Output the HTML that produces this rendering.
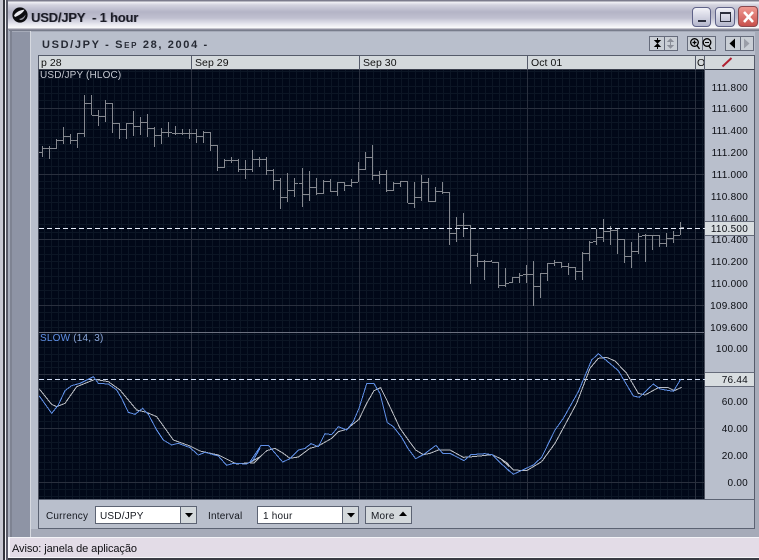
<!DOCTYPE html>
<html><head><meta charset="utf-8"><title>USD/JPY - 1 hour</title>
<style>
html,body{margin:0;padding:0;width:759px;height:560px;overflow:hidden;background:#a6abb9}
body{position:relative;font-family:"Liberation Sans",sans-serif}
div,span{position:absolute;white-space:nowrap;box-sizing:border-box}
.ax{font-size:10px;color:#0c0e14;line-height:13px;letter-spacing:.25px;text-align:right;right:11px;margin-top:1px}
.hd{font-size:10.5px;color:#111;line-height:14px;top:56px;letter-spacing:.05px}
.lb{font-size:10px;color:#15181f;line-height:13px;letter-spacing:.2px;top:510px}
.val{font-size:10px;color:#15181f;line-height:13px;letter-spacing:.2px;top:510px}
.sel{top:506px;height:18px;background:#fff;border:1px solid #5c6373}
.arr{top:506px;height:18px;width:17px;background:#d4d9dc;border:1px solid #5c6373}
.tb{top:36px;height:15px;background:#c9ced5;border:1px solid #656b7b}
</style></head><body>
<!-- outer window remnants -->
<div style="left:0;top:0;width:3px;height:560px;background:#c8c8d2"></div>
<div style="left:3px;top:0;width:2px;height:560px;background:#33343c"></div>
<div style="left:5px;top:0;width:1px;height:560px;background:#f3f3f6"></div>
<div style="left:6px;top:0;width:2px;height:560px;background:#5a5b68"></div>
<!-- title bar -->
<div style="left:8px;top:0;width:751px;height:30px;background:linear-gradient(#7c7c8c 0,#7c7c8c 1px,#f2f2f6 2px,#d2d2de 5px,#b4b4c6 12px,#c0c0d0 18px,#e6e6ee 24px,#fafafc 28px,#8f8f9f 29px)"></div>
<svg style="position:absolute;left:11px;top:6px" width="18" height="18" viewBox="0 0 18 18"><circle cx="9" cy="9" r="7.6" fill="#0c0c10"/><path d="M3 9.5C5 6 9 4 13.5 3.6 12.5 6 9 9 4 11Z" fill="#e8e8ee"/><path d="M8 13c3-.4 5-2 6.5-4.500-.2 3-2.500 5.500-5 5.500Z" fill="#9a9aa6"/></svg>
<div style="left:31px;top:10px;font-size:13px;font-weight:bold;line-height:16px;color:#1b1c26;letter-spacing:-.2px;text-shadow:1px 0 0 rgba(70,70,85,.35)">USD/JPY&nbsp; - 1 hour</div>
<!-- window buttons -->
<div style="left:692px;top:7px;width:19px;height:20px;border:1px solid #5f6288;border-radius:4px;background:linear-gradient(#f2f2f8,#b4b6cc)"><span style="left:5px;top:12px;width:8px;height:2px;background:#2c2e3c"></span></div>
<div style="left:715px;top:7px;width:20px;height:20px;border:1px solid #5f6288;border-radius:4px;background:linear-gradient(#f2f2f8,#b4b6cc)"><span style="left:4px;top:4px;width:11px;height:10px;border:1px solid #2c2e3c;border-top-width:2px"></span></div>
<div style="left:738px;top:6px;width:20px;height:21px;border:1px solid #8a4a50;border-radius:4px;background:linear-gradient(#ef9a92,#c8504c)"><svg style="position:absolute;left:3px;top:3px" width="13" height="14"><path d="M2 2L11 12M11 2L2 12" stroke="#fff" stroke-width="2.600"/></svg></div>
<!-- frame -->
<div style="left:9px;top:30px;width:750px;height:507px;background:#a6abb9;border-top:1px solid #777c8b"></div>
<div style="left:10px;top:31px;width:2px;height:506px;background:#7e8392"></div>
<div style="left:12px;top:32px;width:18px;height:505px;background:#8e94a5"></div>
<div style="left:30px;top:31px;width:1px;height:506px;background:#d6d9e0"></div>
<div style="left:31px;top:32px;width:724px;height:497px;background:#b9bfcc"></div>
<div style="left:755px;top:31px;width:4px;height:506px;background:#a6abb9"></div>
<div style="left:31px;top:529px;width:724px;height:8px;background:#a6abb9"></div>
<div style="left:42px;top:38px;font-size:11px;font-weight:bold;line-height:14px;color:#262a34;letter-spacing:1.650px;font-variant:small-caps">USD/JPY - Sep 28, 2004 -</div>
<!-- toolbar -->
<div class="tb" style="left:649px;width:29px"><span style="left:14px;top:0;width:1px;height:13px;background:#656b7b"></span>
<svg style="position:absolute;left:0;top:0" width="27" height="13"><path d="M7.500 1V5M5 3.500L7.500 6 10 3.500ZM7.500 12V8M5 9.500L7.500 7 10 9.500Z" stroke="#000" fill="#000" stroke-width="1"/><path d="M20.500 2V11M18 4.500L20.500 2 23 4.500ZM18 8.500L20.500 11 23 8.500Z" stroke="#8b8f99" fill="#8b8f99"/></svg></div>
<div class="tb" style="left:687px;width:29px"><span style="left:14px;top:0;width:1px;height:13px;background:#656b7b"></span>
<svg style="position:absolute;left:0;top:0" width="27" height="13"><circle cx="6.500" cy="5.500" r="3.800" fill="none" stroke="#000" stroke-width="1.300"/><path d="M4.500 5.500h4M6.500 3.500v4M9 8.500L11.500 12M20.500 8.500L23 12" stroke="#000" stroke-width="1.300"/><circle cx="19" cy="5.500" r="3.800" fill="none" stroke="#000" stroke-width="1.300"/><path d="M17 5.500h4" stroke="#000"/></svg></div>
<div class="tb" style="left:725px;width:29px"><span style="left:14px;top:0;width:1px;height:13px;background:#656b7b"></span>
<svg style="position:absolute;left:0;top:0" width="27" height="13"><path d="M9 1.500V11.500L3.500 6.500Z" fill="#000"/><path d="M18 1.500V11.500L23.500 6.500Z" fill="#9a9ea8"/></svg></div>
<!-- date header -->
<div style="left:38px;top:55px;width:717px;height:15px;background:#d4d9dc;border:1px solid #555b6a;border-bottom:1px solid #3a3f4c"></div>
<div style="left:191px;top:55px;width:1px;height:15px;background:#555b6a"></div>
<div style="left:359px;top:55px;width:1px;height:15px;background:#555b6a"></div>
<div style="left:527px;top:55px;width:1px;height:15px;background:#555b6a"></div>
<div style="left:695px;top:55px;width:1px;height:15px;background:#555b6a"></div>
<div style="left:704px;top:55px;width:1px;height:15px;background:#555b6a"></div>
<div class="hd" style="left:41px">p 28</div>
<div class="hd" style="left:195px">Sep 29</div>
<div class="hd" style="left:363px">Sep 30</div>
<div class="hd" style="left:531px">Oct 01</div>
<div class="hd" style="left:697px;width:7px;overflow:hidden">Oct</div>
<svg style="position:absolute;left:720px;top:56px" width="14" height="12"><path d="M2.500 10.500L11.500 2" stroke="#b02030" stroke-width="2"/></svg>
<!-- right axis -->
<div style="left:705px;top:70px;width:50px;height:429px;background:#b9bfcc;border-right:1px solid #555b6a"></div>
<div class="ax" style="top:81px">111.800</div>
<div class="ax" style="top:102px">111.600</div>
<div class="ax" style="top:124px">111.400</div>
<div class="ax" style="top:146px">111.200</div>
<div class="ax" style="top:168px">111.000</div>
<div class="ax" style="top:190px">110.800</div>
<div class="ax" style="top:212px">110.600</div>
<div class="ax" style="top:233px">110.400</div>
<div class="ax" style="top:255px">110.200</div>
<div class="ax" style="top:277px">110.000</div>
<div class="ax" style="top:299px">109.800</div>
<div class="ax" style="top:321px">109.600</div>
<div class="ax" style="top:342px">100.00</div>
<div class="ax" style="top:395px">60.00</div>
<div class="ax" style="top:422px">40.00</div>
<div class="ax" style="top:449px">20.00</div>
<div class="ax" style="top:476px">0.00</div>
<div style="left:705px;top:221px;width:50px;height:15px;background:#d8dde0;border-top:1px solid #666c7b;border-bottom:1px solid #666c7b;border-right:1px solid #555b6a"></div>
<div class="ax" style="top:222px">110.500</div>
<div style="left:705px;top:372px;width:50px;height:15px;background:#d8dde0;border-top:1px solid #666c7b;border-bottom:1px solid #666c7b;border-right:1px solid #555b6a"></div>
<div class="ax" style="top:373px">76.44</div>
<!-- chart -->
<svg style="position:absolute;left:0;top:0" width="759" height="560">
<defs><pattern id="v" patternUnits="userSpaceOnUse" x="2" y="0" width="7" height="20"><rect width="1" height="20" fill="#0c1625"/></pattern></defs>
<rect x="39" y="70" width="665" height="429" fill="#010818"/>
<rect x="39" y="70" width="665" height="429" fill="url(#v)"/>
<g shape-rendering="crispEdges" fill="none" stroke-width="1">
<path stroke="#0c1625" d="M39 71.500h665M39 78.500h665M39 86.500h665M39 93.500h665M39 100.500h665M39 115.500h665M39 122.500h665M39 129.500h665M39 137.500h665M39 144.500h665M39 151.500h665M39 158.500h665M39 166.500h665M39 181.500h665M39 188.500h665M39 195.500h665M39 202.500h665M39 210.500h665M39 217.500h665M39 224.500h665M39 232.500h665M39 246.500h665M39 254.500h665M39 261.500h665M39 268.500h665M39 276.500h665M39 283.500h665M39 290.500h665M39 298.500h665M39 312.500h665M39 320.500h665M39 327.500h665M39 334.500h665M39 340.500h665M39 347.500h665M39 354.500h665M39 361.500h665M39 367.500h665M39 381.500h665M39 388.500h665M39 394.500h665M39 401.500h665M39 408.500h665M39 415.500h665M39 421.500h665M39 435.500h665M39 442.500h665M39 448.500h665M39 455.500h665M39 462.500h665M39 469.500h665M39 475.500h665M39 489.500h665M39 496.500h665"/>
<path stroke="#2a303e" d="M39 108.500h665M39 174.500h665M39 239.500h665M39 305.500h665M39 374.500h665M39 428.500h665M39 482.500h665M191.500 70v429M359.500 70v429M527.500 70v429M695.500 70v429"/>
<path stroke="#6c7180" d="M39 332.500h665"/>
<path stroke="#4a4f5c" d="M704.500 70v429M38.500 70v429"/>
<path stroke="#85888f" d="M42.500 146V157M39 152.500h3M43 148.500h3M49.500 146V159M46 148.500h3M50 148.500h3M56.500 139V149M53 148.500h3M57 140.500h3M63.500 127V144M60 140.500h3M64 136.500h3M70.500 134V144M67 136.500h3M71 140.500h3M77.500 133V148M74 140.500h3M78 133.500h3M84.500 95V137M81 133.500h3M85 103.500h3M91.500 95V115M88 103.500h3M92 115.500h3M98.500 110V126M95 115.500h3M99 116.500h3M105.500 100V122M102 116.500h3M106 103.500h3M112.500 103V133M109 103.500h3M113 123.500h3M119.500 123V139M116 123.500h3M120 129.500h3M126.500 123V139M123 129.500h3M127 123.500h3M133.500 111V136M130 123.500h3M134 126.500h3M140.500 117V135M137 126.500h3M141 122.500h3M147.500 114V137M144 122.500h3M148 128.500h3M154.500 127V147M151 128.500h3M155 135.500h3M161.500 128V144M158 135.500h3M162 132.500h3M168.500 122V137M165 132.500h3M169 132.500h3M175.500 126V135M172 133.500h3M176 133.500h3M182.500 129V135M179 133.500h3M183 133.500h3M189.500 129V139M186 133.500h3M190 133.500h3M196.500 129V143M193 133.500h3M197 136.500h3M203.500 131V143M200 136.500h3M204 132.500h3M210.500 132V151M207 132.500h3M211 145.500h3M217.500 145V171M214 145.500h3M218 167.500h3M224.500 159V168M221 167.500h3M225 160.500h3M231.500 157V163M228 160.500h3M232 160.500h3M238.500 159V172M235 160.500h3M239 169.500h3M245.500 160V179M242 169.500h3M246 169.500h3M252.500 150V172M249 169.500h3M253 159.500h3M259.500 157V167M256 159.500h3M260 159.500h3M266.500 157V175M263 159.500h3M267 170.500h3M273.500 169V190M270 170.500h3M274 180.500h3M280.500 178V209M277 180.500h3M281 197.500h3M287.500 173V202M284 197.500h3M288 190.500h3M294.500 178V197M291 190.500h3M295 183.500h3M302.500 168V207M299 183.500h3M303 194.500h3M309.500 171V201M306 194.500h3M310 187.500h3M316.500 178V195M313 187.500h3M317 193.500h3M323.500 180V194M320 193.500h3M324 181.500h3M330.500 179V192M327 181.500h3M331 191.500h3M337.500 182V196M334 191.500h3M338 182.500h3M344.500 182V191M341 182.500h3M345 185.500h3M351.500 179V187M348 185.500h3M352 182.500h3M358.500 162V182M355 182.500h3M359 169.500h3M365.500 152V170M362 169.500h3M366 157.500h3M372.500 145V180M369 157.500h3M373 175.500h3M379.500 171V184M376 175.500h3M380 174.500h3M386.500 170V192M383 174.500h3M387 190.500h3M393.500 182V191M390 190.500h3M394 183.500h3M400.500 181V187M397 183.500h3M401 181.500h3M407.500 181V203M404 181.500h3M408 203.500h3M414.500 182V208M411 203.500h3M415 197.500h3M421.500 175V201M418 197.500h3M422 182.500h3M428.500 178V202M425 182.500h3M429 201.500h3M435.500 187V202M432 201.500h3M436 191.500h3M442.500 182V194M439 191.500h3M443 192.500h3M449.500 192V245M446 192.500h3M450 233.500h3M456.500 217V242M453 233.500h3M457 225.500h3M463.500 213V237M460 225.500h3M464 225.500h3M470.500 225V284M467 225.500h3M471 255.500h3M477.500 253V267M474 255.500h3M478 261.500h3M484.500 260V280M481 261.500h3M485 261.500h3M491.500 260V262M488 261.500h3M492 262.500h3M498.500 262V288M495 262.500h3M499 285.500h3M505.500 268V287M502 285.500h3M506 283.500h3M512.500 277V283M509 282.500h3M513 277.500h3M519.500 273V283M516 277.500h3M520 275.500h3M526.500 265V283M523 274.500h3M527 274.500h3M533.500 261V306M530 274.500h3M534 286.500h3M540.500 273V298M537 286.500h3M541 273.500h3M547.500 263V281M544 273.500h3M548 263.500h3M554.500 260V266M551 263.500h3M555 262.500h3M561.500 262V268M558 262.500h3M562 266.500h3M568.500 263V275M565 266.500h3M569 267.500h3M575.500 267V280M572 267.500h3M576 271.500h3M582.500 252V280M579 271.500h3M583 253.500h3M589.500 241V261M586 253.500h3M590 242.500h3M596.500 229V245M593 241.500h3M597 237.500h3M603.500 219V242M600 237.500h3M604 231.500h3M610.500 226V245M607 231.500h3M611 230.500h3M617.500 228V254M614 230.500h3M618 239.500h3M624.500 239V263M621 239.500h3M625 256.500h3M631.500 242V268M628 256.500h3M632 251.500h3M638.500 233V254M635 251.500h3M639 236.500h3M645.500 234V262M642 235.500h3M646 235.500h3M652.500 235V250M649 235.500h3M653 235.500h3M659.500 235V247M656 235.500h3M660 243.500h3M666.500 233V247M663 243.500h3M667 238.500h3M673.500 231V243M670 238.500h3M674 235.500h3M680.500 222V235M677 235.500h3M681 227.500h3"/>
</g>
<!-- dashed lines -->
<path d="M39 228.500H705" stroke="#e6ecf8" stroke-width="1" stroke-dasharray="5 3" shape-rendering="crispEdges"/>
<path d="M39 379.500H705" stroke="#d4e0f8" stroke-width="1" stroke-dasharray="5 3" shape-rendering="crispEdges"/>
<!-- slow stochastic -->
<g fill="none" stroke-width="1" shape-rendering="crispEdges">
<g transform="translate(30 325) scale(.33333)">
<polyline stroke="#b9bcc2" points="28,192 65,238 80,245 105,235 140,185 195,163 235,170 270,195 320,255 350,262 380,275 430,345 480,363 510,378 565,390 620,417 660,413 690,395" style="vector-effect:non-scaling-stroke"/>
<polyline stroke="#5f8fe6" points="28,213 65,265 85,240 105,197 125,182 150,175 190,155 205,175 235,177 260,195 275,220 295,262 315,268 338,250 355,268 380,315 400,345 425,360 445,355 480,368 505,390 525,382 565,393 590,421 610,415 650,417 670,405 690,370" style="vector-effect:non-scaling-stroke"/>
</g>
<g transform="translate(250 340) scale(.33333)">
<polyline stroke="#b9bcc2" points="0,369 12,369 50,332 75,325 100,340 120,355 145,351 180,325 205,318 245,295 265,275 290,268 327,238 350,190 372,152 392,143 415,190 450,265 475,300 497,330 520,344 540,340 565,330 600,330 640,352 670,350 726,344 750,355 778,380" style="vector-effect:non-scaling-stroke"/>
<polyline stroke="#5f8fe6" points="0,366 33,316 55,316 98,366 120,356 145,330 165,325 183,311 205,320 225,281 245,284 265,260 290,270 310,245 327,205 350,131 372,131 390,160 412,248 430,260 455,292 475,327 497,356 520,344 558,316 578,340 600,340 642,362 663,344 705,341 726,344 778,394" style="vector-effect:non-scaling-stroke"/>
</g>
<g transform="translate(500 340) scale(.33333)">
<polyline stroke="#b9bcc2" points="0,355 20,368 40,390 80,392 125,365 165,310 230,190 270,85 295,55 320,52 345,63 380,100 415,160 435,165 475,143 505,143 523,152 545,142" style="vector-effect:non-scaling-stroke"/>
<polyline stroke="#5f8fe6" points="0,368 40,403 100,375 125,352 165,270 190,235 235,155 275,60 295,41 355,92 400,168 418,172 460,132 480,147 520,154 542,118" style="vector-effect:non-scaling-stroke"/>
</g>
</g>
</svg>
<div style="left:40px;top:69px;font-size:10px;line-height:13px;color:#c6cad2;letter-spacing:.15px">USD/JPY (HLOC)</div>
<div style="left:40px;top:332px;font-size:10px;line-height:13px;color:#5f8fe6;letter-spacing:.2px">SLOW <span style="position:static;color:#8aa6d8">(14, 3)</span></div>
<!-- control bar -->
<div style="left:38px;top:499px;width:717px;height:30px;background:#b9bfcc;border:1px solid #5c6373;border-top:1px solid #5c6373"></div>
<div class="lb" style="left:46px">Currency</div>
<div class="sel" style="left:95px;width:86px"></div>
<div class="val" style="left:100px">USD/JPY</div>
<div class="arr" style="left:180px"><svg style="position:absolute;left:3px;top:6px" width="10" height="6"><path d="M1 0H9L5 4.500Z" fill="#000"/></svg></div>
<div class="lb" style="left:208px">Interval</div>
<div class="sel" style="left:257px;width:86px"></div>
<div class="val" style="left:263px">1 hour</div>
<div class="arr" style="left:342px"><svg style="position:absolute;left:3px;top:6px" width="10" height="6"><path d="M1 0H9L5 4.500Z" fill="#000"/></svg></div>
<div style="left:365px;top:506px;width:47px;height:18px;background:#d4d9dc;border:1px solid #5c6373"></div>
<div class="lb" style="left:371px">More</div>
<svg style="position:absolute;left:398px;top:511px" width="10" height="6"><path d="M1 5H9L5 .5Z" fill="#000"/></svg>
<!-- status bar -->
<div style="left:8px;top:537px;width:751px;height:1px;background:#f4f4f8"></div>
<div style="left:10px;top:538px;width:749px;height:19px;background:#e3dce7"></div>
<div style="left:8px;top:537px;width:2px;height:23px;background:#f4f4f8"></div>
<div style="left:12px;top:542px;font-size:11px;line-height:14px;letter-spacing:-.08px;color:#101014">Aviso: janela de aplicação</div>
<div style="left:8px;top:557px;width:751px;height:1px;background:#f4f4f8"></div>
<div style="left:8px;top:558px;width:751px;height:2px;background:#3a3b44"></div>
</body></html>
